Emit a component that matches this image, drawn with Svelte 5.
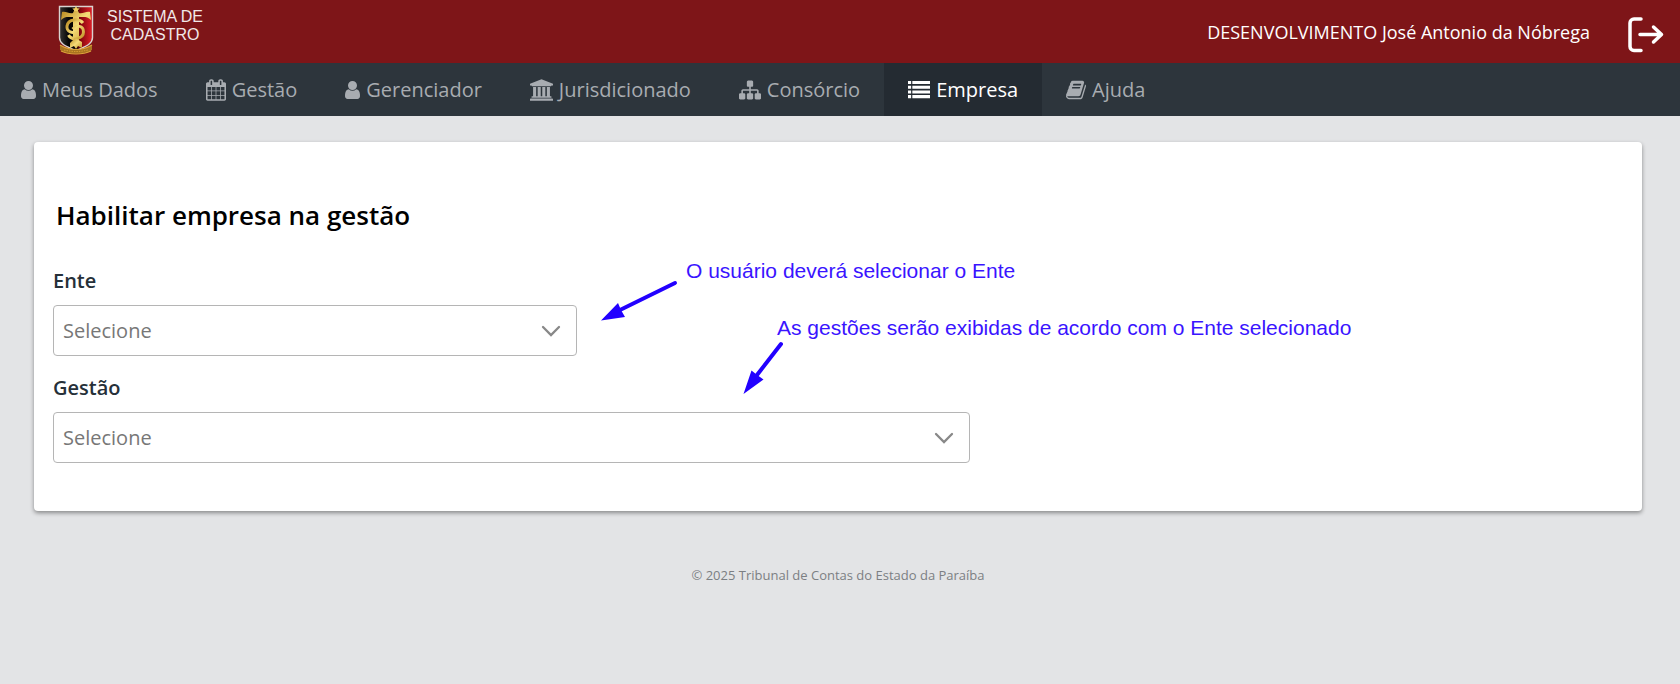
<script>
  const icons = {
    user: {
      box: '256 0 1280 1792', width: 15,
      path: 'M1536 1399q0 109-62.5 187t-150.5 78h-854q-88 0-150.5-78t-62.5-187q0-85 8.5-160.5t31.5-152 58.5-131 94-89 134.5-34.5q131 128 313 128t313-128q76 0 134.5 34.5t94 89 58.5 131 31.5 152 8.5 160.5zm-256-887q0 159-112.5 271.5t-271.5 112.5-271.5-112.5-112.5-271.5 112.5-271.5 271.5-112.5 271.5 112.5 112.5 271.5z'
    },
    calendar: {
      box: '64 0 1664 1792', width: 20,
      path: 'M192 1664h288v-288h-288v288zm352 0h320v-288h-320v288zm-352-352h288v-320h-288v320zm352 0h320v-320h-320v320zm-352-384h288v-288h-288v288zm736 736h320v-288h-320v288zm-384-736h320v-288h-320v288zm768 736h288v-288h-288v288zm-384-352h320v-320h-320v320zm-352-864v-288q0-13-9.5-22.5t-22.5-9.5h-64q-13 0-22.5 9.5t-9.5 22.5v288q0 13 9.5 22.5t22.5 9.5h64q13 0 22.5-9.5t9.5-22.5zm736 864h288v-320h-288v320zm-384-384h320v-288h-320v288zm384 0h288v-288h-288v288zm32-480v-288q0-13-9.5-22.5t-22.5-9.5h-64q-13 0-22.5 9.5t-9.5 22.5v288q0 13 9.5 22.5t22.5 9.5h64q13 0 22.5-9.5t9.5-22.5zm384-64v1280q0 52-38 90t-90 38h-1408q-52 0-90-38t-38-90v-1280q0-52 38-90t90-38h128v-96q0-66 47-113t113-47h64q66 0 113 47t47 113v96h384v-96q0-66 47-113t113-47h64q66 0 113 47t47 113v96h128q52 0 90 38t38 90z'
    },
    bank: {
      box: '0 0 1920 1792', width: 23,
      path: 'M960 0l960 384v128h-128q0 26-20.5 45t-48.5 19h-1526q-28 0-48.5-19t-20.5-45h-128v-128zm-704 640h256v768h128v-768h256v768h128v-768h256v768h128v-768h256v768h59q28 0 48.5 19t20.5 45v64h-1664v-64q0-26 20.5-45t48.5-19h59v-768zm1595 960q28 0 48.5 19t20.5 45v128h-1920v-128q0-26 20.5-45t48.5-19h1782z'
    },
    sitemap: {
      box: '0 0 1792 1792', width: 22,
      path: 'M1792 1248v320q0 40-28 68t-68 28h-320q-40 0-68-28t-28-68v-320q0-40 28-68t68-28h96v-192h-512v192h96q40 0 68 28t28 68v320q0 40-28 68t-68 28h-320q-40 0-68-28t-28-68v-320q0-40 28-68t68-28h96v-192h-512v192h96q40 0 68 28t28 68v320q0 40-28 68t-68 28h-320q-40 0-68-28t-28-68v-320q0-40 28-68t68-28h96v-192q0-52 38-90t90-38h512v-192h-96q-40 0-68-28t-28-68v-320q0-40 28-68t68-28h320q40 0 68 28t28 68v320q0 40-28 68t-68 28h-96v192h512q52 0 90 38t38 90v192h96q40 0 68 28t28 68z'
    },
    list: {
      box: '0 0 1792 1792', width: 22,
      path: 'M0 160h256v256H0zM352 160h1440v256H352zM0 544h256v256H0zM352 544h1440v256H352zM0 928h256v256H0zM352 928h1440v256H352zM0 1312h256v256H0zM352 1312h1440v256H352z'
    },
    book: {
      box: '64 0 1664 1792', width: 20,
      path: 'M1703 478q40 57 18 129l-275 906q-19 64-76.5 107.5t-122.5 43.5h-923q-77 0-148.5-53.5t-99.5-131.5q-24-67-2-127 0-4 3-27t4-37q1-8-3-21.5t-3-19.5q2-11 8-21t16.5-23.5 16.5-23.5q23-38 45-91.5t30-91.5q3-10 .5-30t-.5-28q3-11 17-28t17-23q21-36 42-92t25-90q1-9-2.5-32t.5-28q4-13 22-30.5t22-22.5q19-26 42.5-84.5t27.5-96.5q1-8-3-25.5t-2-26.5q2-8 9-18t18-23 17-21q8-12 16.5-30.5t15-35 16-36 19.5-32 26.5-23.5 36-11.5 47.5 5.5l-1 3q38-9 51-9h761q74 0 114 56t18 130l-274 906q-36 119-71.5 153.5t-128.5 34.5h-869q-27 0-38 15-11 16-1 43 24 70 144 70h923q29 0 56-15.5t35-41.5l300-987q7-22 5-57 38 15 59 43zm-1064 2q-4 13 2 22.5t20 9.5h608q13 0 25.5-9.5t16.5-22.5l21-64q4-13-2-22.5t-20-9.5h-608q-13 0-25.5 9.5t-16.5 22.5zm-83 256q-4 13 2 22.5t20 9.5h608q13 0 25.5-9.5t16.5-22.5l21-64q4-13-2-22.5t-20-9.5h-608q-13 0-25.5 9.5t-16.5 22.5z'
    }
  };

  const menu = [
    { label: 'Meus Dados', icon: icons.user },
    { label: 'Gestão', icon: icons.calendar },
    { label: 'Gerenciador', icon: icons.user },
    { label: 'Jurisdicionado', icon: icons.bank },
    { label: 'Consórcio', icon: icons.sitemap },
    { label: 'Empresa', icon: icons.list, active: true },
    { label: 'Ajuda', icon: icons.book }
  ];

  const fields = [
    { id: 'ente', label: 'Ente', size: 'third' },
    { id: 'gestao', label: 'Gestão', size: 'wide' }
  ];
</script>

<header>
  <a class="brand" href="#inicio">
    <svg class="crest" width="36" height="50" viewBox="0 0 36 50" aria-hidden="true">
      <defs>
        <linearGradient id="gold" x1="0" y1="0" x2="1" y2="1">
          <stop offset="0" stop-color="#b98a20" />
          <stop offset="0.5" stop-color="#f6dc78" />
          <stop offset="1" stop-color="#c29227" />
        </linearGradient>
        <linearGradient id="field" x1="0" x2="1">
          <stop offset="0" stop-color="#383634" />
          <stop offset="0.28" stop-color="#050505" />
          <stop offset="0.52" stop-color="#0b0303" />
          <stop offset="0.62" stop-color="#80050b" />
          <stop offset="1" stop-color="#e02129" />
        </linearGradient>
      </defs>
      <path d="M1.500 1.500h33v31c0 7-8 9-16.500 13.500C9.500 41.500 1.500 39.500 1.500 32.500z" fill="url(#field)" stroke="#d9d2cf" stroke-width="1.400" />
      <path d="M18 1l1.200 2.200 2.500.4-1.800 1.700.4 2.500L18 6.600l-2.300 1.200.4-2.500-1.800-1.700 2.500-.4z" fill="#efce62" />
      <path d="M4 7c4-1 7 2 11 1l1-2h4l1 2c4 1 7-2 11-1l1 8c-4-4-7-3-12-3v25h-6V12c-5 0-8-1-12 3z" fill="url(#gold)" />
      <path d="M25 18c-4-5-15-4-16 3-.7 6 6 8 10 5M10.500 30c3 6 15 4 15-3s-7-7-11-3" fill="none" stroke="url(#gold)" stroke-width="3" />
      <path d="M12 38l5-5 7 4v6l-4-2-2 3-2-3-4 2z" fill="url(#gold)" />
      <path d="M2 40c10 6 22 6 32 0v5c-8 5-24 5-32 0z" fill="#a87420" />
      <path d="M2 40c10 6 22 6 32 0M3 46c8 4 22 4 30 0" fill="none" stroke="#dda43a" stroke-width="1.200" />
      <path d="M6 45c8 2 16 2 24 0" fill="none" stroke="#d79d32" stroke-dasharray="1.500 1" />
    </svg>
    <span>SISTEMA DE<br />CADASTRO</span>
  </a>
  <div class="session">
    <span>DESENVOLVIMENTO José Antonio da Nóbrega</span>
    <button type="button" aria-label="Sair">
      <svg width="36" height="36" viewBox="0 0 36 36" fill="none" stroke="#fff" stroke-width="3.500" stroke-linecap="round" stroke-linejoin="round" aria-hidden="true">
        <path d="M13 2H6a4 4 0 0 0-4 4v23.500a4 4 0 0 0 4 4h7" />
        <path d="M12 17.500h21.500M25.500 10l8 7.500-8 7.500" />
      </svg>
    </button>
  </div>
</header>

<nav>
  {#each menu as item}
    <a href="#menu" class:active={item.active} aria-current={item.active ? 'page' : undefined}>
      <svg width={item.icon.width} height="22" viewBox={item.icon.box} aria-hidden="true"><path d={item.icon.path} /></svg>
      <span>{item.label}</span>
    </a>
  {/each}
</nav>

<main>
  <section class="card">
    <h1>Habilitar empresa na gestão</h1>
    <form>
      {#each fields as field}
        <div class="field">
          <label for={field.id}>{field.label}</label>
          <div class="control {field.size}">
            <select id={field.id}><option>Selecione</option></select>
            <svg width="20" height="12" viewBox="0 0 20 12" fill="none" stroke="#888" stroke-width="2.300" stroke-linecap="round" aria-hidden="true"><path d="M2 2l8 8 8-8" /></svg>
          </div>
        </div>
      {/each}
    </form>
    <p class="note note-ente">O usuário deverá selecionar o Ente</p>
    <svg class="arrow arrow-ente" width="78" height="42" viewBox="0 0 78 42" aria-hidden="true">
      <path d="M75 4L20 31" stroke="#2200ff" stroke-width="4" stroke-linecap="round" />
      <path d="M1 41.500L18 24l3 7 4 7z" fill="#2200ff" />
    </svg>
    <p class="note note-gestao">As gestões serão exibidas de acordo com o Ente selecionado</p>
    <svg class="arrow arrow-gestao" width="42" height="54" viewBox="0 0 42 54" aria-hidden="true">
      <path d="M38 4L14 35" stroke="#2200ff" stroke-width="4" stroke-linecap="round" />
      <path d="M.500 54L8.500 30.500l5 4 7 5z" fill="#2200ff" />
    </svg>
  </section>
</main>

<footer>© 2025 Tribunal de Contas do Estado da Paraíba</footer>

<style>
  :global(body) {
    background: #e3e4e6;
    color: #263039;
    font-family: "Open Sans", "Noto Sans", sans-serif;
  }
  header {
    display: flex;
    align-items: center;
    justify-content: space-between;
    min-height: 63px;
    padding: 0 16px 0 58px;
    background: #7e1518;
    color: #fff;
    box-sizing: border-box;
  }
  .brand {
    display: flex;
    gap: 13px;
    padding-bottom: 4px;
    color: #f1e8e8;
    font: 16px/18px "Liberation Sans", sans-serif;
    text-align: center;
    text-decoration: none;
  }
  .brand span {
    padding-top: 3px;
  }
  .crest {
    display: block;
  }
  .session {
    display: flex;
    align-items: center;
    gap: 38px;
    font-size: 18px;
  }
  button {
    display: flex;
    padding: 6px 0 0;
    border: 0;
    background: none;
    cursor: pointer;
  }
  nav {
    display: flex;
    background: #2d353c;
  }
  nav a {
    display: flex;
    align-items: center;
    gap: 6px;
    padding: 0 24px;
    color: #a8acb1;
    font-size: 20px;
    line-height: 53px;
    text-decoration: none;
  }
  nav a:first-child {
    padding-left: 21px;
  }
  nav svg {
    fill: currentColor;
  }
  nav a.active {
    background: #242b32;
    color: #fff;
  }
  main {
    padding: 26px 38px 0 34px;
  }
  .card {
    position: relative;
    padding: 54px 17px 48px 19px;
    border-radius: 4px;
    background: #fff;
    box-shadow: 0 2px 4px rgba(0, 0, 0, 0.4);
  }
  h1 {
    margin: 0 3px;
    color: #000;
    font-size: 26px;
    font-weight: 600;
    line-height: 38px;
  }
  form {
    display: grid;
    gap: 17px;
    padding-top: 32px;
  }
  .field {
    display: grid;
    gap: 9px;
  }
  label {
    font-size: 20px;
    font-weight: 600;
    line-height: 30px;
  }
  .control {
    display: grid;
    align-items: center;
  }
  .third {
    width: 33.333%;
  }
  .wide {
    width: 58.333%;
  }
  select,
  .control svg {
    grid-area: 1 / 1;
  }
  select {
    width: 100%;
    height: 51px;
    padding: 0 44px 0 9px;
    border: 1px solid #b5b5b5;
    border-radius: 4px;
    background: #fff;
    color: #777;
    font: inherit;
    font-size: 20px;
    appearance: none;
    box-sizing: border-box;
  }
  .control svg {
    justify-self: end;
    margin-right: 16px;
    pointer-events: none;
  }
  .note {
    position: absolute;
    margin: 0;
    color: #3a14ff;
    font: 21px/24px "Liberation Sans", sans-serif;
    white-space: nowrap;
  }
  .note-ente {
    top: 117px;
    left: 652px;
  }
  .note-gestao {
    top: 174px;
    left: 743px;
  }
  .arrow {
    position: absolute;
  }
  .arrow-ente {
    top: 137px;
    left: 566px;
  }
  .arrow-gestao {
    top: 198px;
    left: 709px;
  }
  footer {
    padding: 54px 4px 24px 0;
    color: #7c7f83;
    font-size: 13px;
    line-height: 20px;
    text-align: center;
  }
</style>
